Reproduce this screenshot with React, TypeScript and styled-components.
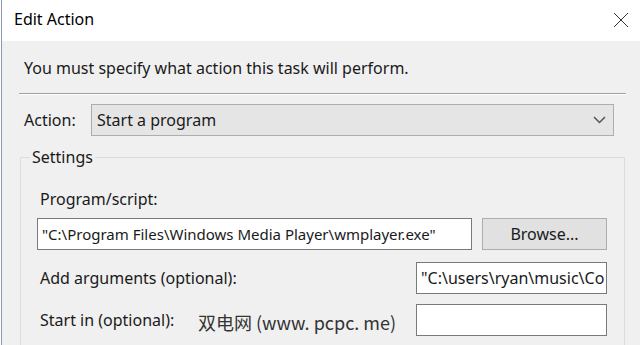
import React from 'react';
import styled, { createGlobalStyle } from 'styled-components';

const GlobalStyle = createGlobalStyle`
  html, body {
    margin: 0;
    padding: 0;
    background: #ffffff;
  }
  body {
    font-family: "Noto Sans", "Liberation Sans", sans-serif;
    color: #000;
  }
`;

const Window = styled.div`
  position: relative;
  width: 638px;
  height: 345px;
  margin-left: 1px;
  border-left: 1px solid #8e9aab;
  background: #f0f0f0;
  overflow: hidden;
  display: flex;
  flex-direction: column;
`;

const TitleBar = styled.div`
  height: 41px;
  flex: none;
  background: #ffffff;
  display: flex;
  align-items: center;
  justify-content: space-between;
  padding: 0 11px 0 12px;
`;

const Title = styled.span`
  font-size: 16px;
  color: #000;
  margin-top: -3px;
`;

const CloseButton = styled.svg`
  width: 16px;
  height: 16px;
  margin-top: -2px;
`;

const Body = styled.div`
  padding: 0 14px 0 17px;
  display: flex;
  flex-direction: column;
`;

const Prompt = styled.div`
  font-size: 16px;
  line-height: 22px;
  padding: 16px 0 0 5px;
  color: #1a1a1a;
`;

const Separator = styled.div`
  margin-top: 14px;
  height: 1px;
  background: #a0a0a0;
  border-bottom: 1px solid #ffffff;
`;

const ActionRow = styled.div`
  display: flex;
  align-items: center;
  margin-top: 9px;
  padding-left: 5px;
  padding-right: 12px;
`;

const Label = styled.span<{ $width?: number }>`
  font-size: 16px;
  line-height: 22px;
  color: #1a1a1a;
  width: ${(p) => (p.$width ? `${p.$width}px` : 'auto')};
  flex: none;
`;

const Select = styled.div`
  flex: 1;
  height: 30px;
  background: #e5e5e5;
  border: 1px solid #adadad;
  display: flex;
  align-items: center;
  justify-content: space-between;
  padding: 0 7px 0 5px;
  font-size: 16px;
  color: #1a1a1a;
`;

const GroupBox = styled.fieldset`
  margin: 10px 1px 0 1px;
  padding: 0 0 0 16px;
  border: 1px solid #dcdcdc;
  height: 220px;
  min-width: 0;
`;

const Legend = styled.legend`
  margin-left: -7px;
  padding: 0 2px;
  font-size: 16px;
  line-height: 22px;
  color: #1a1a1a;
`;

const FieldLabel = styled.div`
  font-size: 16px;
  line-height: 22px;
  color: #1a1a1a;
  margin: 20px 0 0 3px;
`;

const Row = styled.div<{ $top: number }>`
  display: flex;
  align-items: center;
  margin-top: ${(p) => p.$top}px;
  padding-right: 17px;
`;

const TextInput = styled.div<{ $width?: number; $size?: number }>`
  height: 32px;
  box-sizing: border-box;
  background: #ffffff;
  border: 1px solid #7a7a7a;
  font-size: ${(p) => p.$size ?? 15}px;
  line-height: 30px;
  padding: 0 4px;
  white-space: nowrap;
  overflow: hidden;
  color: #1a1a1a;
  ${(p) => (p.$width ? `width: ${p.$width}px; flex: none;` : 'flex: 1;')}
`;

const Button = styled.div`
  width: 125px;
  height: 32px;
  box-sizing: border-box;
  margin-left: 10px;
  flex: none;
  background: #e1e1e1;
  border: 1px solid #adadad;
  display: flex;
  align-items: center;
  justify-content: center;
  font-size: 16px;
  color: #1a1a1a;
`;

const FormLine = styled.div<{ $top: number }>`
  display: flex;
  align-items: center;
  justify-content: space-between;
  margin-top: ${(p) => p.$top}px;
  padding: 0 17px 0 3px;
`;

const Watermark = styled.div`
  position: absolute;
  left: 196px;
  top: 309px;
  font-family: "Noto Sans CJK SC", sans-serif;
  font-size: 18px;
  color: #333333;
  white-space: pre;
`;

export default function App() {
  return (
    <>
      <GlobalStyle />
      <Window>
        <TitleBar>
          <Title>Edit Action</Title>
          <CloseButton viewBox="0 0 16 16">
            <path d="M1 1 L15 15 M15 1 L1 15" stroke="#333" strokeWidth="1" fill="none" />
          </CloseButton>
        </TitleBar>
        <Body>
          <Prompt>You must specify what action this task will perform.</Prompt>
          <Separator />
          <ActionRow>
            <Label $width={67}>Action:</Label>
            <Select>
              <span>Start a program</span>
              <svg width="13" height="8" viewBox="0 0 13 8">
                <path d="M1 1 L6.5 6.5 L12 1" stroke="#555" strokeWidth="1.5" fill="none" />
              </svg>
            </Select>
          </ActionRow>
          <GroupBox>
            <Legend>Settings</Legend>
            <FieldLabel>Program/script:</FieldLabel>
            <Row $top={8}>
              <TextInput $width={435}>"C:\Program Files\Windows Media Player\wmplayer.exe"</TextInput>
              <Button>Browse...</Button>
            </Row>
            <FormLine $top={12}>
              <Label>Add arguments (optional):</Label>
              <TextInput $width={191} $size={16}>"C:\users\ryan\music\Co</TextInput>
            </FormLine>
            <FormLine $top={10}>
              <Label>Start in (optional):</Label>
              <TextInput $width={191} />
            </FormLine>
          </GroupBox>
        </Body>
        <Watermark>双电网 (www. pcpc. me)</Watermark>
      </Window>
    </>
  );
}
